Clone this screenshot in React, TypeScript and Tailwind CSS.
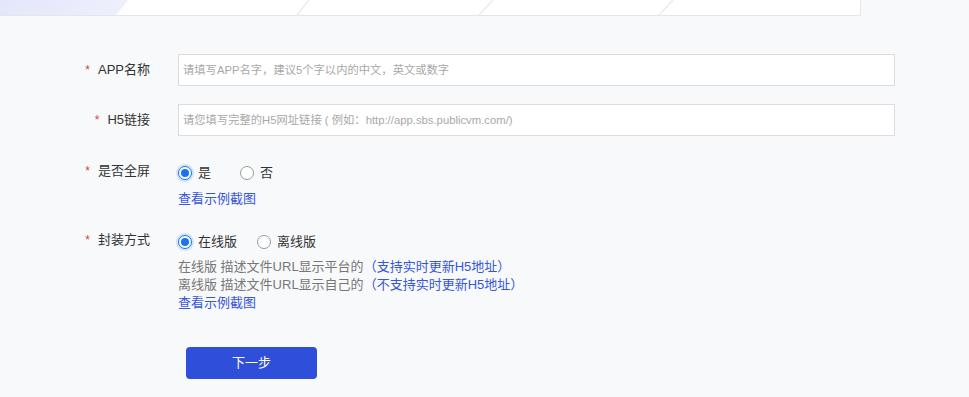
import React from "react";

const font = { fontFamily: '"Liberation Sans", "Noto Sans CJK SC", sans-serif' };

function Radio({ checked }: { checked: boolean }) {
  return checked ? (
    <span className="inline-flex h-[14px] w-[14px] shrink-0 items-center justify-center rounded-full border border-[#1a73f0] bg-white shadow-[0_0_0_2px_rgba(26,115,240,0.18)]">
      <span className="h-[8px] w-[8px] rounded-full bg-[#1a73f0]" />
    </span>
  ) : (
    <span className="inline-block h-[14px] w-[14px] shrink-0 rounded-full border border-[#9a9a9a] bg-white" />
  );
}

function Label({ text }: { text: string }) {
  return (
    <div className="flex w-[150px] shrink-0 items-start justify-end text-[13px] leading-[16px] text-[#333]">
      <span className="mr-[8px] text-[12px] text-[#e4393c]">*</span>
      <span>{text}</span>
    </div>
  );
}

export default function App() {
  return (
    <div className="min-h-[397px] w-full bg-[#f8f9fb]" style={font}>
      <div className="h-[16px] w-[861px] border-b border-r border-[#e6e6e8] bg-white">
        <svg width="860" height="15" viewBox="0 0 860 15" className="block">
          <defs>
            <linearGradient id="lav" x1="0" y1="0" x2="1" y2="0">
              <stop offset="0" stopColor="#e4e6fb" />
              <stop offset="1" stopColor="#eef0fc" />
            </linearGradient>
          </defs>
          <polygon points="0,0 128,0 116,15 0,15" fill="url(#lav)" />
          <line x1="309" y1="0" x2="297" y2="15" stroke="#ececef" strokeWidth="1.5" />
          <line x1="493" y1="0" x2="479" y2="15" stroke="#ececef" strokeWidth="1.5" />
          <line x1="673" y1="0" x2="659" y2="15" stroke="#ececef" strokeWidth="1.5" />
        </svg>
      </div>

      <div className="pt-[38px]">
        {/* APP名称 */}
        <div className="flex items-center">
          <div className="flex w-[150px] shrink-0 items-center justify-end text-[13px] text-[#333]">
            <span className="mr-[8px] text-[12px] text-[#e4393c]">*</span>
            <span>APP名称</span>
          </div>
          <div className="ml-[28px] flex h-[32px] w-[717px] items-center border border-[#dcdcdc] bg-white pl-[4px] text-[11.3px] text-[#a8a8a8]">
            请填写APP名字，建议5个字以内的中文，英文或数字
          </div>
        </div>

        {/* H5链接 */}
        <div className="mt-[18px] flex items-center">
          <div className="flex w-[150px] shrink-0 items-center justify-end text-[13px] text-[#333]">
            <span className="mr-[8px] text-[12px] text-[#e4393c]">*</span>
            <span>H5链接</span>
          </div>
          <div className="ml-[28px] flex h-[32px] w-[717px] items-center border border-[#dcdcdc] bg-white pl-[4px] text-[11.3px] text-[#a8a8a8]">
            请您填写完整的H5网址链接 ( 例如：http://app.sbs.publicvm.com/)
          </div>
        </div>

        {/* 是否全屏 */}
        <div className="mt-[27px] flex items-start">
          <Label text="是否全屏" />
          <div className="ml-[28px]">
            <div className="flex h-[20px] items-center text-[13px] text-[#333]">
              <Radio checked />
              <span className="ml-[6px]">是</span>
              <span className="ml-[29px]" />
              <Radio checked={false} />
              <span className="ml-[6px]">否</span>
            </div>
            <div className="mt-[7px] text-[13px] leading-[18px] text-[#3657d8]">查看示例截图</div>
          </div>
        </div>

        {/* 封装方式 */}
        <div className="mt-[24px] flex items-start">
          <Label text="封装方式" />
          <div className="ml-[28px]">
            <div className="flex h-[20px] items-center text-[13px] text-[#333]">
              <Radio checked />
              <span className="ml-[6px]">在线版</span>
              <span className="ml-[20px]" />
              <Radio checked={false} />
              <span className="ml-[6px]">离线版</span>
            </div>
            <div className="mt-[6px] text-[13px] leading-[18px] text-[#777]">
              在线版 描述文件URL显示平台的<span className="text-[#3657d8]">（支持实时更新H5地址）</span>
            </div>
            <div className="text-[13px] leading-[18px] text-[#777]">
              离线版 描述文件URL显示自己的<span className="text-[#3657d8]">（不支持实时更新H5地址）</span>
            </div>
            <div className="text-[13px] leading-[18px] text-[#3657d8]">查看示例截图</div>
          </div>
        </div>

        <div className="ml-[186px] mt-[35px]">
          <button className="flex h-[32px] w-[131px] items-center justify-center rounded-[4px] bg-[#2f4fdb] text-[13px] text-white">
            下一步
          </button>
        </div>
      </div>
    </div>
  );
}
